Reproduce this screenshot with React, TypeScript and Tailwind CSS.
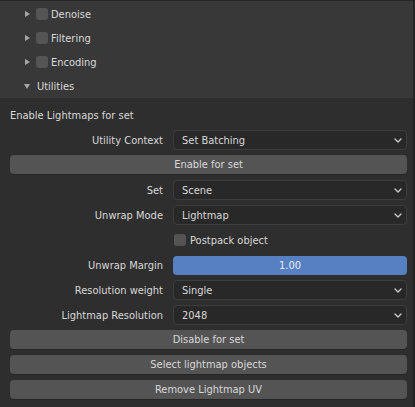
import React from "react";

const Chevron = () => (
  <svg width="8" height="5" viewBox="0 0 8 5" className="shrink-0">
    <polyline points="1,1 4,4 7,1" fill="none" stroke="#c8c8c8" strokeWidth="1.4" strokeLinecap="round" strokeLinejoin="round" />
  </svg>
);

const TriRight = () => (
  <svg width="5" height="6" viewBox="0 0 5 6" className="shrink-0">
    <polygon points="0,0 5,3 0,6" fill="#a8a8a8" />
  </svg>
);

const TriDown = () => (
  <svg width="6" height="5" viewBox="0 0 6 5" className="shrink-0">
    <polygon points="0,0 6,0 3,5" fill="#a8a8a8" />
  </svg>
);

const SubHeader = ({ label }: { label: string }) => (
  <div className="h-[24px] flex items-center pl-[25px]">
    <TriRight />
    <div className="ml-[6px] w-[12px] h-[12px] rounded-[3px] bg-[#545454]" />
    <span className="ml-[3px]">{label}</span>
  </div>
);

const Dropdown = ({ value }: { value: string }) => (
  <div className="h-[20px] rounded-[4px] border border-[#3d3d3d] bg-[#282828] pl-[8px] pr-[4px] flex items-center justify-between">
    <span>{value}</span>
    <Chevron />
  </div>
);

const Row = ({ label, children }: { label: string; children: React.ReactNode }) => (
  <div className="grid grid-cols-[153px_1fr] gap-x-[10px] items-center h-[20px]">
    <div className="text-right">{label}</div>
    {children}
  </div>
);

const Button = ({ label }: { label: string }) => (
  <div className="h-[20px]">
    <div className="h-[19px] rounded-[4px] bg-[#545454] flex items-center justify-center shadow-[0_1px_0_#262626]">
      {label}
    </div>
  </div>
);

export default function App() {
  return (
    <div className="w-[415px] h-[407px] flex bg-[#2e2e2e] text-[11px] leading-none text-[#d8d8d8] font-['DejaVu_Sans_Condensed','DejaVu_Sans',sans-serif] overflow-hidden">
      <div className="flex-1 flex flex-col">
        <div className="bg-[#383838] border-t border-[#262626] pt-[1px]">
          <SubHeader label="Denoise" />
          <SubHeader label="Filtering" />
          <SubHeader label="Encoding" />
          <div className="h-[24px] flex items-center pl-[24px]">
            <TriDown />
            <span className="ml-[7px]">Utilities</span>
          </div>
        </div>
        <div className="flex-1 pt-[7px] pl-[10px] pr-[6px] flex flex-col gap-[5px]">
          <div className="h-[20px] flex items-center">Enable Lightmaps for set</div>
          <Row label="Utility Context">
            <Dropdown value="Set Batching" />
          </Row>
          <Button label="Enable for set" />
          <Row label="Set">
            <Dropdown value="Scene" />
          </Row>
          <Row label="Unwrap Mode">
            <Dropdown value="Lightmap" />
          </Row>
          <Row label="">
            <div className="flex items-center pl-[1px]">
              <div className="w-[12px] h-[12px] rounded-[3px] bg-[#545454]" />
              <span className="ml-[4px]">Postpack object</span>
            </div>
          </Row>
          <Row label="Unwrap Margin">
            <div className="h-[19px] rounded-[4px] bg-[#5680c2] flex items-center justify-center text-[#ececec]">1.00</div>
          </Row>
          <Row label="Resolution weight">
            <Dropdown value="Single" />
          </Row>
          <Row label="Lightmap Resolution">
            <Dropdown value="2048" />
          </Row>
          <Button label="Disable for set" />
          <Button label="Select lightmap objects" />
          <Button label="Remove Lightmap UV" />
        </div>
      </div>
      <div className="w-[2px] bg-[#242424]" />
    </div>
  );
}
